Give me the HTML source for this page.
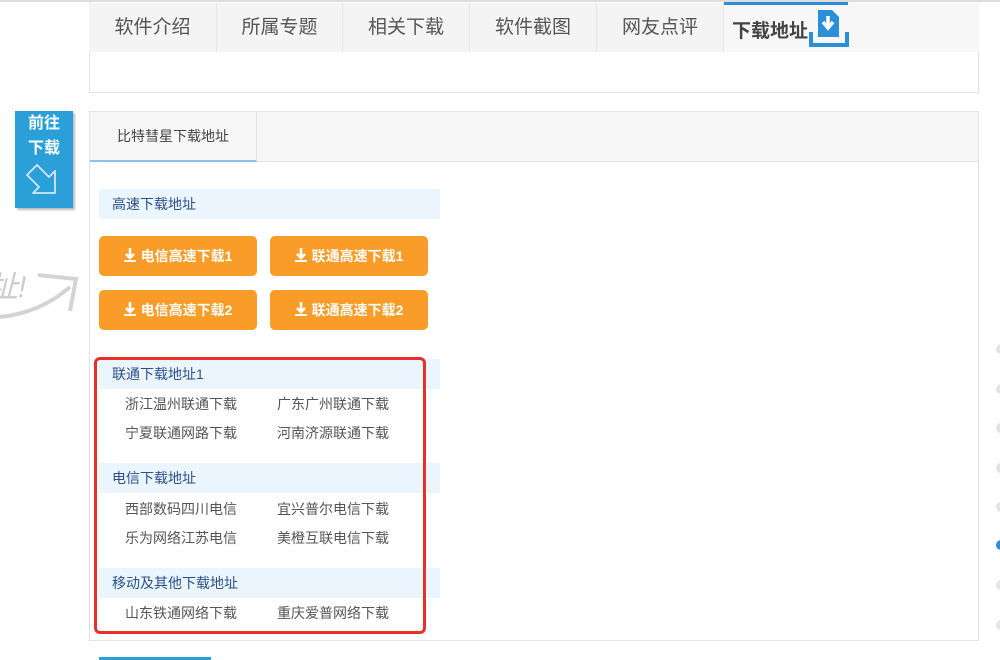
<!DOCTYPE html>
<html><head><meta charset="utf-8"><style>
*{margin:0;padding:0;box-sizing:border-box}
body{width:1000px;height:660px;overflow:hidden;background:#fff;position:relative;font-family:"Liberation Sans","Noto Sans CJK SC",sans-serif}
.a{position:absolute}
.tab{position:absolute;top:3px;height:49px;line-height:50px;font-size:19px;color:#555;text-align:center;background:#f4f4f4;border-right:1px solid #e6e6e6}
.hd{position:absolute;left:99px;width:341px;height:30px;background:#eaf5fd;color:#2d4f8a;font-size:14px;line-height:30px;padding-left:13px}
.btn{position:absolute;width:158px;height:40px;background:#f99c28;border-radius:5px;color:#fff;font-size:14px;font-weight:bold;line-height:40px;text-align:center}
.btn svg{vertical-align:-2px;margin-right:5px}
.it{position:absolute;font-size:14px;color:#555}
.dot{position:absolute;left:996px;width:10px;height:10px;border-radius:50%;background:#e4e4e4}
</style></head><body>
<div class="a" style="left:0;top:0;width:1000px;height:2px;background:#ddd"></div>
<div class="a" style="left:89px;top:2px;width:890px;height:91px;border:1px solid #e3e3e3;border-top:none;background:#fff"></div>
<div class="tab" style="left:89px;width:128px">软件介绍</div>
<div class="tab" style="left:217px;width:126px">所属专题</div>
<div class="tab" style="left:343px;width:127px">相关下载</div>
<div class="tab" style="left:470px;width:127px">软件截图</div>
<div class="tab" style="left:597px;width:127px">网友点评</div>
<div class="tab" style="left:724px;width:255px;background:#f7f7f7;border:none"></div>
<div class="a" style="left:724px;top:2px;width:124px;height:3px;background:#2b8fd8"></div>
<div class="a" style="left:732px;top:16px;font-size:19px;font-weight:bold;color:#444">下载地址</div>
<svg class="a" style="left:808px;top:8px" width="42" height="40" viewBox="0 0 42 40"><path d="M10 2h14l7 7v20H10z" fill="#2b8fd8"/><path d="M20 8v10M15 14l5 6 5-6" stroke="#fff" stroke-width="3.5" fill="none"/><path d="M3 24v13h36V24" stroke="#2b8fd8" stroke-width="4" fill="none"/></svg>

<div class="a" style="left:15px;top:111px;width:58px;height:97px;background:#2a9fd8;box-shadow:2px 2px 2px #bbb;color:#fff;font-weight:bold;font-size:16px;text-align:center;line-height:25px">前往<br>下载</div>
<svg class="a" style="left:25px;top:160px" width="40" height="40" viewBox="0 0 40 40"><path d="M2 15L12 5 24 17 30 11V33H8l6-6z" fill="none" stroke="#cfe9f8" stroke-width="1.8" stroke-linejoin="round"/></svg>
<div class="a" style="left:-12px;top:262px;font-size:30px;color:#ccc;font-style:italic">址!</div>
<svg class="a" style="left:0;top:265px" width="85" height="60"><path d="M0 52 Q40 48 70 22" stroke="#d3d3d3" stroke-width="4" fill="none"/><path d="M38 10 L76 14 L70 46" stroke="#d3d3d3" stroke-width="4" fill="none"/></svg>

<div class="a" style="left:89px;top:111px;width:890px;height:530px;border:1px solid #e3e3e3;background:#fff"></div>
<div class="a" style="left:90px;top:112px;width:888px;height:50px;background:#f6f6f6;border-bottom:1px solid #e3e3e3"></div>
<div class="a" style="left:90px;top:112px;width:167px;height:50px;border-right:1px solid #e3e3e3;border-bottom:2px solid #8cc0ea;font-size:14px;color:#444;line-height:48px;text-align:center">比特彗星下载地址</div>

<div class="hd" style="top:189px">高速下载地址</div>
<div class="btn" style="left:99px;top:236px"><svg width="12" height="16"><path d="M6 1v9M2 7l4 4 4-4" stroke="#fff" stroke-width="2.6" fill="none"/><path d="M0 14h12" stroke="#fff" stroke-width="2"/></svg>电信高速下载1</div>
<div class="btn" style="left:270px;top:236px"><svg width="12" height="16"><path d="M6 1v9M2 7l4 4 4-4" stroke="#fff" stroke-width="2.6" fill="none"/><path d="M0 14h12" stroke="#fff" stroke-width="2"/></svg>联通高速下载1</div>
<div class="btn" style="left:99px;top:290px"><svg width="12" height="16"><path d="M6 1v9M2 7l4 4 4-4" stroke="#fff" stroke-width="2.6" fill="none"/><path d="M0 14h12" stroke="#fff" stroke-width="2"/></svg>电信高速下载2</div>
<div class="btn" style="left:270px;top:290px"><svg width="12" height="16"><path d="M6 1v9M2 7l4 4 4-4" stroke="#fff" stroke-width="2.6" fill="none"/><path d="M0 14h12" stroke="#fff" stroke-width="2"/></svg>联通高速下载2</div>

<div class="hd" style="top:359px">联通下载地址1</div>
<div class="it" style="left:125px;top:394px">浙江温州联通下载</div>
<div class="it" style="left:277px;top:394px">广东广州联通下载</div>
<div class="it" style="left:125px;top:423px">宁夏联通网路下载</div>
<div class="it" style="left:277px;top:423px">河南济源联通下载</div>
<div class="hd" style="top:463px">电信下载地址</div>
<div class="it" style="left:125px;top:499px">西部数码四川电信</div>
<div class="it" style="left:277px;top:499px">宜兴普尔电信下载</div>
<div class="it" style="left:125px;top:528px">乐为网络江苏电信</div>
<div class="it" style="left:277px;top:528px">美橙互联电信下载</div>
<div class="hd" style="top:568px">移动及其他下载地址</div>
<div class="it" style="left:125px;top:603px">山东铁通网络下载</div>
<div class="it" style="left:277px;top:603px">重庆爱普网络下载</div>
<div class="a" style="left:94px;top:357px;width:332px;height:277px;border:3px solid #e8302a;border-radius:6px"></div>

<div class="a" style="left:99px;top:657px;width:112px;height:3px;background:#2a9fd8"></div>
<div class="dot" style="top:344px"></div><div class="dot" style="top:384px"></div><div class="dot" style="top:423px"></div><div class="dot" style="top:463px"></div><div class="dot" style="top:502px"></div><div class="dot" style="top:540px;background:#2b8fd8"></div><div class="dot" style="top:580px"></div><div class="dot" style="top:620px"></div>
</body></html>
